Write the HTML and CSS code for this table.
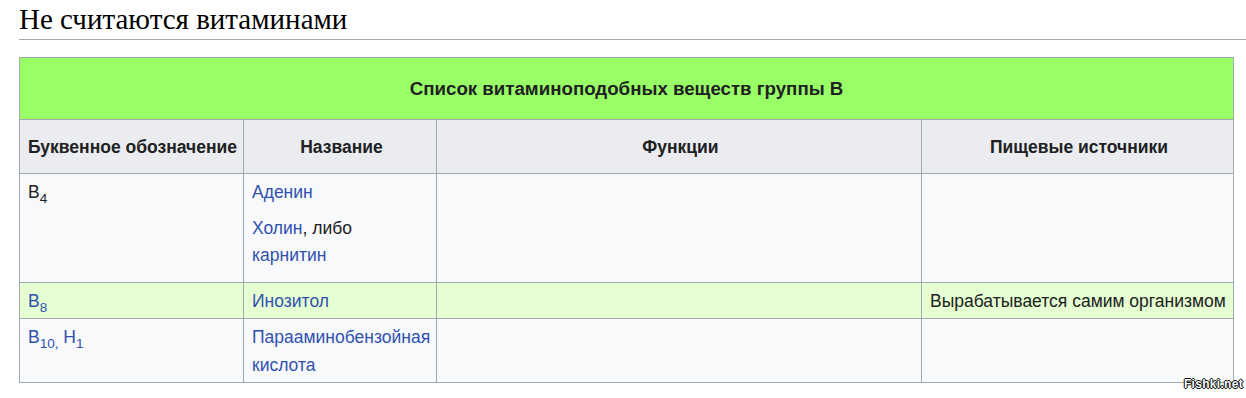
FILE: index.html
```html
<!DOCTYPE html>
<html lang="ru">
<head>
<meta charset="utf-8">
<link rel="stylesheet" href="styles.css">
</head>
<body>
<div class="page">
  <h2 class="heading">Не считаются витаминами</h2>
  <table class="wikitable">
    <colgroup>
      <col class="c1"><col class="c2"><col class="c3"><col class="c4">
    </colgroup>
    <tr>
      <th colspan="4" class="title">Список витаминоподобных веществ группы В</th>
    </tr>
    <tr class="head">
      <th>Буквенное обозначение</th>
      <th>Название</th>
      <th>Функции</th>
      <th>Пищевые источники</th>
    </tr>
    <tr>
      <td>B<sub>4</sub></td>
      <td><a>Аденин</a><p class="para"><a>Холин</a>, либо <a>карнитин</a></p></td>
      <td></td>
      <td></td>
    </tr>
    <tr class="green">
      <td><a>B<sub>8</sub></a></td>
      <td><a>Инозитол</a></td>
      <td></td>
      <td>Вырабатывается самим организмом</td>
    </tr>
    <tr>
      <td><a>B<sub>10,</sub></a> <a>H<sub>1</sub></a></td>
      <td><a>Парааминобензойная кислота</a></td>
      <td></td>
      <td></td>
    </tr>
  </table>
</div>
<div class="watermark">Fishki.net</div>
</body>
</html>
```

FILE: styles.css
```css
html, body {
  margin: 0;
  padding: 0;
  background: #ffffff;
}
body {
  width: 1246px;
  height: 398px;
  overflow: hidden;
  position: relative;
  font-family: "Liberation Sans", Arial, sans-serif;
  color: #202122;
}
.page {
  padding: 0 0 0 19px;
}
.heading {
  margin: 0;
  padding: 5px 0 5px 0;
  font-family: "Liberation Serif", "DejaVu Serif", serif;
  font-weight: normal;
  font-size: 29px;
  line-height: 29px;
  border-bottom: 1px solid #a2a9b1;
  color: #000;
}
.wikitable {
  margin-top: 17px;
  border-collapse: collapse;
  table-layout: fixed;
  width: 1214px;
  background: #f8f9fa;
  font-size: 17.5px;
  line-height: 28px;
  border: 1px solid #a2a9b1;
}
.c1 { width: 224px; }
.c2 { width: 193px; }
.c3 { width: 485px; }
.c4 { width: 312px; }
.wikitable th, .wikitable td {
  border: 1px solid #a2a9b1;
  padding: 4px 5px 3px 8px;
  vertical-align: top;
  text-align: left;
}
.wikitable th {
  font-weight: bold;
  background: #eaecf0;
  text-align: center;
  vertical-align: middle;
}
.wikitable th.title {
  background: #99ff66;
  padding: 17px 8px 16px 8px;
  font-size: 18.7px;
}
.wikitable .head th {
  padding: 13px 5px 12px 8px;
}
.wikitable .head th:first-child {
  text-align: left;
}
.green td {
  background: #e5ffd3;
}
a {
  color: #3050b0;
  text-decoration: none;
}
sub {
  font-size: 13.5px;
  line-height: 0;
  vertical-align: -5px;
}
.para {
  margin: 9px 0 10px 0;
  line-height: 27px;
}
.watermark {
  position: absolute;
  right: 3px;
  bottom: 8px;
  font-family: "Liberation Sans", Arial, sans-serif;
  font-weight: bold;
  font-size: 12px;
  line-height: 12px;
  letter-spacing: 0.3px;
  color: #fff;
  text-shadow: -1px 0 #000, 1px 0 #000, 0 -1px #000, 0 1px #000;
}
```
